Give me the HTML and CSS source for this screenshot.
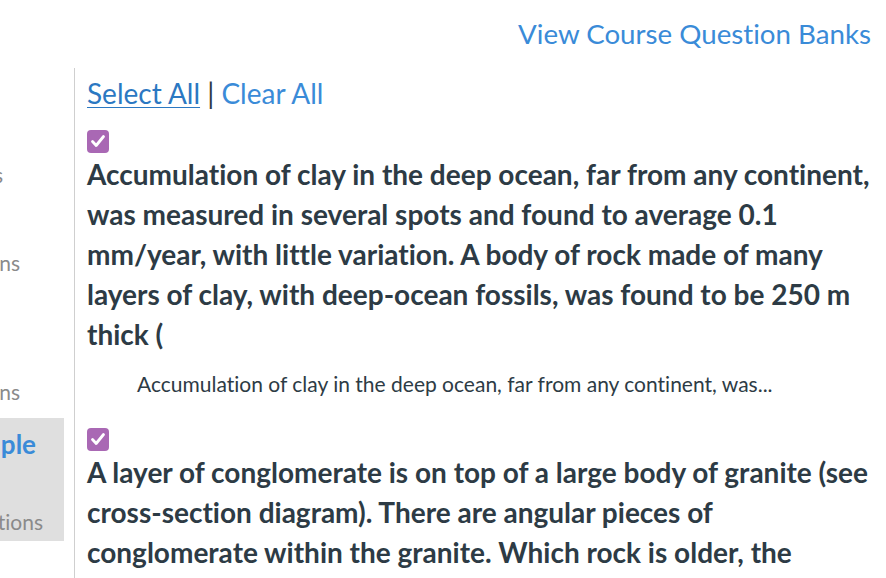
FILE: index.html
```html
<!DOCTYPE html>
<html>
<head>
<meta charset="utf-8">
<link rel="stylesheet" href="styles.css">
</head>
<body>
<div class="header">
  <a class="bank-link" href="#">View Course Question Banks</a>
</div>
<div class="main">
  <div class="sidebar">
    <div class="side-item s1"><span>Questions</span></div>
    <div class="side-item s2"><span>Questions</span></div>
    <div class="side-item s3"><span>Questions</span></div>
    <div class="side-active">
      <div class="side-item s4"><span class="bank-name">Sample</span></div>
      <div class="side-item s5"><span>Questions</span></div>
    </div>
  </div>
  <div class="content">
    <div class="actions"><a class="select-all" href="#">Select All</a> <span class="sep">|</span> <a class="clear-all" href="#">Clear All</a></div>
    <div class="question first">
      <span class="checkbox"><svg viewBox="0 0 22 22" width="22" height="22"><path d="M5.5 11.5 L9.2 15.5 L16.5 6.5" fill="none" stroke="#fff" stroke-width="2.8" stroke-linecap="round" stroke-linejoin="round"/></svg></span>
      <div class="q-title">Accumulation of clay in the deep ocean, far from any continent, was measured in several spots and found to average 0.1 mm/year, with little variation. A body of rock made of many layers of clay, with deep-ocean fossils, was found to be 250 m thick (</div>
      <div class="q-summary">Accumulation of clay in the deep ocean, far from any continent, was...</div>
    </div>
    <div class="question second">
      <span class="checkbox"><svg viewBox="0 0 22 22" width="22" height="22"><path d="M5.5 11.5 L9.2 15.5 L16.5 6.5" fill="none" stroke="#fff" stroke-width="2.8" stroke-linecap="round" stroke-linejoin="round"/></svg></span>
      <div class="q-title">A layer of conglomerate is on top of a large body of granite (see cross-section diagram). There are angular pieces of conglomerate within the granite. Which rock is older, the</div>
    </div>
  </div>
</div>
</body>
</html>
```

FILE: styles.css
```css
html, body {
  margin: 0;
  padding: 0;
  background: #fff;
  overflow: hidden;
}
body {
  font-family: Lato, "Open Sans", sans-serif;
  font-variant-ligatures: none;
  color: #2d3b45;
  width: 886px;
  height: 578px;
}
a {
  color: #3a8bd8;
  text-decoration: none;
}
.header {
  height: 68px;
  display: flex;
  justify-content: flex-end;
  align-items: center;
  padding-right: 15px;
}
.bank-link {
  font-size: 27.7px;
  line-height: 34px;
}
.main {
  display: flex;
  height: 510px;
}
.sidebar {
  width: 74px;
  flex: none;
}
.side-item {
  display: flex;
  justify-content: flex-end;
  overflow: hidden;
  white-space: nowrap;
  font-size: 21px;
  line-height: 28px;
  color: #8a8a8a;
}
.s1 { margin-top: 93px; padding-right: 61px; width: 3px; }
.s2 { margin-top: 60px; padding-right: 44px; width: 20px; }
.s3 { margin-top: 101px; padding-right: 44px; width: 20px; }
.side-active {
  margin-top: 12px;
  width: 64px;
  height: 123px;
  background: #dfdfdf;
  overflow: hidden;
}
.s4 {
  margin-top: 10px;
  padding-right: 24px;
  width: 36px;
  line-height: 32px;
}
.bank-name {
  font-size: 26px;
  font-weight: 700;
  color: #3a8bd8;
}
.s5 {
  margin-top: 48px;
  padding-right: 21px;
  width: 43px;
}
.content {
  flex: 1;
  border-left: 1px solid #cfcfcf;
  padding-left: 12px;
  padding-right: 14px;
}
.actions {
  margin-top: 8px;
  font-size: 28px;
  line-height: 34px;
}
.select-all {
  color: #2b78c2;
  text-decoration: underline;
  text-decoration-thickness: 1px;
  text-underline-offset: 3px;
}
.sep {
  color: #2d3b45;
}
.checkbox {
  display: block;
  width: 22px;
  height: 23px;
  border-radius: 4px;
  background: #a968b4;
}
.question.first .checkbox { margin-top: 20px; }
.question.second .checkbox { margin-top: 29px; }
.q-title {
  margin-top: 1px;
  font-size: 28px;
  font-weight: 700;
  line-height: 40px;
}
.q-summary {
  margin-top: 15px;
  padding-left: 50px;
  font-size: 21px;
  line-height: 30px;
}
```
